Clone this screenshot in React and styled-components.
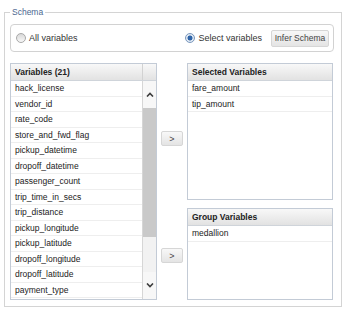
import React from 'react';
import styled, { createGlobalStyle } from 'styled-components';

const GlobalStyle = createGlobalStyle`
  html, body {
    margin: 0;
    padding: 0;
    background: #fff;
  }
  body {
    font-family: "Liberation Sans", Arial, sans-serif;
    color: #222;
  }
`;

const Page = styled.div`
  width: 344px;
  height: 312px;
  box-sizing: border-box;
  padding: 6px 2px 0 4px;
`;

const Frame = styled.fieldset`
  margin: 0;
  width: 338px;
  height: 301px;
  box-sizing: border-box;
  border: 1px solid #d4d4d4;
  padding: 6px 7px 5px 5px;
  min-width: 0;
`;

const Legend = styled.legend`
  padding: 0 2px;
  font-size: 8.5px;
  line-height: 12px;
  color: #4b6790;
`;

const RadioBar = styled.div`
  height: 28px;
  box-sizing: border-box;
  border: 1px solid #d2d2d2;
  border-radius: 4px;
  display: flex;
  align-items: center;
  padding: 0 4px 0 5px;
`;

const Option = styled.label`
  display: flex;
  align-items: center;
  gap: 3px;
  font-size: 9px;
  color: #333;
  margin-right: ${(p) => p.$mr || 0}px;
`;

const Radio = styled.span`
  width: 10px;
  height: 10px;
  box-sizing: border-box;
  border-radius: 50%;
  border: 1px solid ${(p) => (p.$on ? '#7b98bd' : '#a9a9a9')};
  background: ${(p) =>
    p.$on
      ? 'radial-gradient(circle, #2f64a8 0 2.2px, #dfe8f3 2.8px)'
      : 'linear-gradient(#d8d8d8, #f8f8f8)'};
`;

const Spacer = styled.div`
  flex: 1;
`;

const Button = styled.button`
  font-family: inherit;
  height: ${(p) => p.$h}px;
  width: ${(p) => p.$w}px;
  padding: 0;
  box-sizing: border-box;
  border: 1px solid #d6d6d6;
  border-radius: 2px;
  background: linear-gradient(#f8f8f8, #e4e4e4);
  color: #444;
  font-size: ${(p) => p.$fs || 8.5}px;
  margin-top: ${(p) => p.$mt || 0}px;
  margin-left: 4px;
`;

const Columns = styled.div`
  margin-top: 11px;
  height: 237px;
  display: grid;
  grid-template-columns: 147px 30px 146px;
`;

const Panel = styled.div`
  border: 1px solid #c3cbd6;
  background: #fff;
  display: flex;
  flex-direction: column;
  overflow: hidden;
  box-sizing: border-box;
  height: ${(p) => (p.$h ? `${p.$h}px` : 'auto')};
`;

const HeaderRow = styled.div`
  display: flex;
  height: 17px;
  box-sizing: border-box;
  border-bottom: 1px solid #cfd4da;
  background: linear-gradient(#f8f8f8, #e2e2e2);
`;

const HeaderCell = styled.div`
  flex: 1;
  padding-left: 4px;
  font-size: 8.5px;
  font-weight: bold;
  line-height: 16px;
  color: #222;
`;

const HeaderCorner = styled.div`
  width: 13px;
  border-left: 1px solid #d2d2d2;
`;

const Body = styled.div`
  flex: 1;
  display: flex;
  min-height: 0;
`;

const Rows = styled.div`
  flex: 1;
  overflow: hidden;
`;

const Row = styled.div`
  height: 15.5px;
  box-sizing: border-box;
  border-bottom: 1px solid #eeeeee;
  padding-left: 4px;
  font-size: 8.5px;
  line-height: 14.5px;
  color: #222;
  white-space: nowrap;
`;

const Scrollbar = styled.div`
  width: 13px;
  border-left: 1px solid #d6d6d6;
  display: flex;
  flex-direction: column;
  background: #f2f2f2;
`;

const ArrowCell = styled.div`
  height: 27px;
  display: flex;
  align-items: center;
  justify-content: center;
  background: #f7f7f7;
`;

const Thumb = styled.div`
  height: 129px;
  background: #c9c9c9;
`;

const Track = styled.div`
  flex: 1;
`;

const Middle = styled.div`
  display: grid;
  grid-template-rows: 137px 92px;
  row-gap: 8px;
  align-items: start;
`;

const Right = styled.div`
  display: flex;
  flex-direction: column;
  gap: 8px;
`;

const Chevron = ({ up }) => (
  <svg width="8" height="5" viewBox="0 0 8 5">
    <polyline
      points={up ? '1,4.5 4,1.5 7,4.5' : '1,0.5 4,3.5 7,0.5'}
      fill="none"
      stroke="#3c3c3c"
      strokeWidth="1.6"
    />
  </svg>
);

const variables = [
  'hack_license',
  'vendor_id',
  'rate_code',
  'store_and_fwd_flag',
  'pickup_datetime',
  'dropoff_datetime',
  'passenger_count',
  'trip_time_in_secs',
  'trip_distance',
  'pickup_longitude',
  'pickup_latitude',
  'dropoff_longitude',
  'dropoff_latitude',
  'payment_type',
];

export default function App() {
  return (
    <Page>
      <GlobalStyle />
      <Frame>
        <Legend>Schema</Legend>
        <RadioBar>
          <Option>
            <Radio />
            All variables
          </Option>
          <Spacer />
          <Option $mr={5}>
            <Radio $on />
            Select variables
          </Option>
          <Button $w={58} $h={17}>Infer Schema</Button>
        </RadioBar>

        <Columns>
          <Panel>
            <HeaderRow>
              <HeaderCell>Variables (21)</HeaderCell>
              <HeaderCorner />
            </HeaderRow>
            <Body>
              <Rows>
                {variables.map((v) => (
                  <Row key={v}>{v}</Row>
                ))}
              </Rows>
              <Scrollbar>
                <ArrowCell>
                  <Chevron up />
                </ArrowCell>
                <Thumb />
                <Track />
                <ArrowCell>
                  <Chevron />
                </ArrowCell>
              </Scrollbar>
            </Body>
          </Panel>

          <Middle>
            <Button $w={22} $h={15} $mt={68} $fs={9}>&gt;</Button>
            <Button $w={22} $h={15} $mt={40} $fs={9}>&gt;</Button>
          </Middle>

          <Right>
            <Panel $h={137}>
              <HeaderRow>
                <HeaderCell>Selected Variables</HeaderCell>
              </HeaderRow>
              <Row>fare_amount</Row>
              <Row>tip_amount</Row>
            </Panel>
            <Panel $h={92}>
              <HeaderRow>
                <HeaderCell>Group Variables</HeaderCell>
              </HeaderRow>
              <Row>medallion</Row>
            </Panel>
          </Right>
        </Columns>
      </Frame>
    </Page>
  );
}
